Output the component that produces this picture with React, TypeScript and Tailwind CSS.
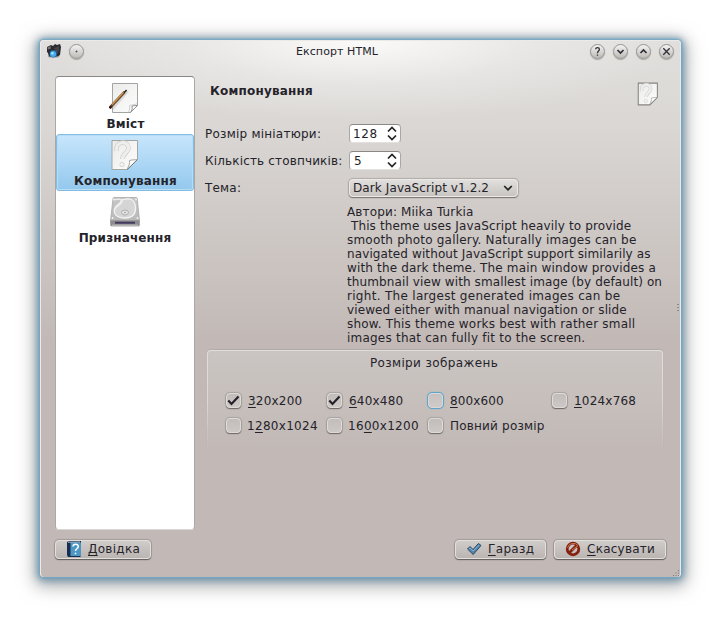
import React from 'react';

const WinButton = ({ children }: { children?: React.ReactNode }) => (
  <div className="h-[15px] w-[15px] rounded-full border border-[#96928f] bg-gradient-to-b from-[#f4f3f2] to-[#bdb9b6] shadow-[0_1px_1px_#aaa6a2]">
    <svg viewBox="0 0 13 13" className="block h-[13px] w-[13px]" fill="none" stroke="#302e35" strokeWidth="1.3">
      {children}
    </svg>
  </div>
);

const Page = ({ pencil, question, big }: { pencil?: boolean; question?: boolean; big?: boolean }) => (
  <svg viewBox="0 0 32 32" className="block h-full w-full">
    <defs>
      <linearGradient id="paper" x1="0" y1="0" x2="1" y2="1">
        <stop offset="0" stopColor="#ebebea" />
        <stop offset="1" stopColor="#fdfdfd" />
      </linearGradient>
    </defs>
    <path d={question ? 'M3 1.500h25.500v19l-10 10H3z' : 'M3.500 1.500h25v22l-7 7h-18z'} fill="url(#paper)" stroke={big ? '#a3a5a3' : '#85857f'} strokeWidth={big ? 1 : 1.4} />
    {question && (
      <>
        <path d="M7.500 12C6 2 19 1 19.500 9c0 5-6 5-6 11" fill="none" stroke="#cdcdcd" strokeWidth="4.600" />
        <path d="M7.500 12C6 2 19 1 19.500 9c0 5-6 5-6 11" fill="none" stroke="#eeeeed" strokeWidth="3.200" />
        <circle cx="13" cy="25.500" r="2.200" fill="#f3f3f3" stroke="#cdcdcd" strokeWidth=".8" />
        <path d="M28.500 20.500c-3 .5-6 .3-8 1 .5 3-.5 5-2.500 9z" fill="#fff" stroke="#a0a2a0" strokeWidth="1" />
        <path d="M28 21L18.500 30.500" stroke="#6f716f" strokeWidth=".8" />
      </>
    )}
    {pencil && (
      <>
        <path d="M28.500 23.500c-2 .2-4 0-5.500.5.500 2.500 0 4.500-1.500 6.500z" fill="#fff" stroke="#8d8f8d" strokeWidth="1" />
        <path d="M19.500 30c1.500-2 1-4 1-6.500 3-1 5-.5 8-2" fill="none" stroke="#c2c2c2" strokeWidth=".8" />
        <path d="M3 27L18.500 9" stroke="#999" strokeWidth="3" opacity=".3" />
        <path d="M1.500 25L15.500 10" stroke="#5c4128" strokeWidth="2.600" />
        <path d="M3 22.700L14.800 10" stroke="#cf9450" strokeWidth="1.500" />
        <path d="M15 10.800L17.600 8" stroke="#222" strokeWidth="1.500" />
        <path d="M.5 26.200l1.700-1.700" stroke="#33130d" strokeWidth="2.600" />
      </>
    )}
  </svg>
);

const Disk = () => (
  <svg viewBox="0 0 32 32" className="block h-8 w-8">
    <defs>
      <linearGradient id="disk" x1="0" y1="0" x2="0" y2="1">
        <stop offset="0" stopColor="#c6c6c6" />
        <stop offset="1" stopColor="#b9b9b9" />
      </linearGradient>
    </defs>
    <path d="M4 2.500q.2-1 1-1h22q1 0 1.200 1l2.300 22h-29z" fill="url(#disk)" stroke="#aaa" strokeWidth=".8" />
    <path d="M1.500 24.500h29v4q0 1.500-1 1.500H2.500q-1 0-1-1.500z" fill="#8d8d90" stroke="#999" strokeWidth=".8" />
    <path d="M6 26.700h20" stroke="#433860" strokeWidth="2" />
    <path d="M3 29.200h26" stroke="#c4c4c4" strokeWidth="1" />
    <path d="M17 3c6-1 9 2 9.500 8s-2 11-10.500 11S4.500 18 5.500 13c1-4 5-4 6-7 .5-2 2-2.700 5.500-3z" fill="#d5d5d5" stroke="#f3f3f3" strokeWidth="1.300" />
    <path d="M6 4c3-1.500 8-1 7 2s-6 4-7 7" fill="none" stroke="#efefef" strokeWidth="1.200" />
    <ellipse cx="16" cy="16.500" rx="3.500" ry="2.500" fill="#e2e2e2" stroke="#a5a5a5" strokeWidth=".8" />
    <circle cx="16" cy="16.500" r=".8" fill="#999" />
    <circle cx="5" cy="3.500" r=".9" fill="#f4f4f4" />
    <circle cx="27" cy="3.500" r=".9" fill="#f4f4f4" />
    <circle cx="28.500" cy="22" r=".9" fill="#f4f4f4" />
    <circle cx="3.500" cy="22" r=".9" fill="#f4f4f4" />
  </svg>
);

const Camera = () => (
  <svg viewBox="0 0 16 16" className="block h-4 w-4">
    <path d="M1 4l4-2 2 1 2-2 2 1 3-1 1 3-1 8-3 2H3L2 10 1 9z" fill="#2b2a30" />
    <path d="M1.500 4.500l3-1.500.5 2.500-3 1z" fill="#77757a" />
    <path d="M8 5l5-2v5l-2 3z" fill="#454249" />
    <path d="M1.500 13h12l-1 1.500H3z" fill="#909090" opacity=".7" />
    <circle cx="7.300" cy="10.700" r="3.800" fill="#23638f" />
    <circle cx="7.100" cy="11" r="3" fill="#43aaf0" />
    <circle cx="6.400" cy="10.200" r="1.200" fill="#a9e5ff" />
  </svg>
);

const Spin = ({ value, cls }: { value: string; cls: string }) => (
  <div className="flex h-[19px] w-[52px] items-center justify-between rounded-[4px] border border-[#aaa6a3] border-t-[#8b8784] border-b-[#e3e0de] bg-white pr-[3px] pl-[3px]">
    <span className={cls}>{value}</span>
    <svg viewBox="0 0 10 15" className="h-[15px] w-[10px]" fill="none" stroke="#222" strokeWidth="1.700">
      <path d="M1 5.500L5 1.500 9 5.500M1 9.500L5 13.500 9 9.500" />
    </svg>
  </div>
);

const Check = ({ pre = '', hot = '', post, checked, focus, cls }: { pre?: string; hot?: string; post: string; checked?: boolean; focus?: boolean; cls: string }) => (
  <div className="flex h-[25px] items-center">
    <div
      className={
        focus
          ? 'h-[17px] w-[17px] rounded-[5px] border-[1.500px] border-[#5fa4cc] bg-gradient-to-b from-[#c7c2bf] to-[#d0cbc8] shadow-[inset_0_0_0_1px_#dcd9d7,0_0_1px_#5fa4cc]'
          : 'mb-px ml-px h-[15px] w-[15px] rounded-[4px] border border-[#dedbd9] bg-gradient-to-b from-[#c2bdba] to-[#cdc8c5] shadow-[0_1px_1px_#6e6a68,0_0_1px_1px_#a8a39f]'
      }
    >
      {checked && (
        <svg viewBox="0 0 13 13" className="block h-[13px] w-[13px]" fill="none" stroke="#242228" strokeWidth="2.200">
          <path d="M1.300 6.500L4.500 10 11.500 2.500" />
        </svg>
      )}
    </div>
    <span className={cls}>
      {pre}
      <u className="underline decoration-1 underline-offset-2">{hot}</u>
      {post}
    </span>
  </div>
);

const PushButton = ({ hot, post, icon, cls, textCls }: { hot: string; post: string; icon: React.ReactNode; cls: string; textCls: string }) => (
  <button className={`flex h-[19px] items-center rounded-[4px] border border-[#e2dfdd] bg-gradient-to-b from-[#d0ccca] to-[#bbb5b2] pl-[10px] shadow-[0_1px_1px_#625e5c,0_0_1px_1px_#a29d9a] ${cls}`}>
    {icon}
    <span className={textCls}>
      <u className="underline decoration-1 underline-offset-2">{hot}</u>
      {post}
    </span>
  </button>
);

const lines: [string, string][] = [
  ['Автори: Miika Turkia', 'tracking-[0.15px]'],
  ['\u00a0This theme uses JavaScript heavily to provide', 'tracking-[0.135px]'],
  ['smooth photo gallery. Naturally images can be', 'tracking-[0.2px]'],
  ['navigated without JavaScript support similarily as', 'tracking-[0.11px]'],
  ['with the dark theme. The main window provides a', 'tracking-[0.155px]'],
  ['thumbnail view with smallest image (by default) on', 'tracking-[0.11px]'],
  ['right. The largest generated images can be', 'tracking-[0.3px]'],
  ['viewed either with manual navigation or slide', 'tracking-[0.11px]'],
  ['show. This theme works best with rather small', 'tracking-[0.2px]'],
  ['images that can fully fit to the screen.', 'tracking-[0.22px]'],
];

export default function App() {
  return (
    <div className="h-[617px] w-[721px] overflow-hidden bg-white pt-[40px] pl-[40px] font-['DejaVu_Sans',sans-serif] text-[12px] leading-[14px] whitespace-nowrap text-[#25232a]">
      <div className="flex h-[537px] w-[641px] flex-col rounded-[4px] border border-b-0 border-[#ece9e7] bg-[radial-gradient(ellipse_320px_80px_at_50%_0,#fafaf9_0%,#f4f3f266_55%,transparent_100%),linear-gradient(to_bottom,#e1dfdd_0px,#d9d6d3_90px,#c2b9b6_300px,#c2b9b6_100%)] shadow-[0_0_2px_1px_#6fa9c8,0_1px_7px_3px_#5688a5b3,0_4px_17px_6px_#80808099]">
        <div className="flex h-[20px] shrink-0 items-center pr-[6px] pl-[5px]">
          <Camera />
          <div className="ml-[7px]">
            <WinButton>
              <circle cx="6.500" cy="6.500" r=".5" strokeWidth="1" />
            </WinButton>
          </div>
          <div className="flex-1 pt-px text-center text-[11px] tracking-[0.08px]">Експорт HTML</div>
          <div className="flex gap-[8px]">
            <WinButton>
              <path d="M4.600 4.200C4.700 2 8.400 2 8.400 4.200c0 2-1.900 1.500-1.900 4M6.500 9.500v1.200" />
            </WinButton>
            <WinButton>
              <path d="M3.500 5L6.500 8l3-3" strokeWidth="1.700" />
            </WinButton>
            <WinButton>
              <path d="M3.500 8L6.500 5l3 3" strokeWidth="1.700" />
            </WinButton>
            <WinButton>
              <path d="M3.300 3.300l6.400 6.400M9.700 3.300l-6.400 6.400" />
            </WinButton>
          </div>
        </div>

        <div className="mt-[15px] flex h-[454px] shrink-0 pl-[14px]">
          <div className="flex w-[140px] shrink-0 flex-col rounded-[4px] border border-[#aaa7a5] border-t-[#898684] border-b-[#d9d6d4] bg-white text-center font-bold">
            <div className="flex h-[57px] flex-col items-center pt-[5px]">
              <div className="h-8 w-8">
                <Page pencil big />
              </div>
              <div className="mt-[3px] ml-px tracking-[0.2px]">Вміст</div>
            </div>
            <div className="flex h-[57px] flex-col items-center rounded-[3px] border border-[#83bce2] bg-gradient-to-b from-[#c7e6fc] to-[#93c8ed] pt-[4px] shadow-[inset_0_0_0_1px_#b6dcf6]">
              <div className="mr-px h-8 w-8">
                <Page question big />
              </div>
              <div className="mt-[3px] ml-px tracking-[0.2px]">Компонування</div>
            </div>
            <div className="flex h-[57px] flex-col items-center pt-[5px]">
              <Disk />
              <div className="mt-[3px] tracking-[0.15px]">Призначення</div>
            </div>
          </div>

          <div className="ml-[10px] flex w-[458px] flex-col">
            <div className="flex h-[44px] items-start justify-between pt-[6px] pr-[3px] pl-[5px]">
              <span className="mt-[2px] font-bold tracking-[0.2px]">Компонування</span>
              <div className="h-6 w-6">
                <Page question />
              </div>
            </div>
            <div className="flex h-[27px] items-center">
              <span className="w-[144px] tracking-[0.23px]">Розмір мініатюри:</span>
              <Spin value="128" cls="tracking-[0.6px]" />
            </div>
            <div className="flex h-[27px] items-center">
              <span className="w-[144px] tracking-[0.16px]">Кількість стовпчиків:</span>
              <Spin value="5" cls="pl-px tracking-[0.4px]" />
            </div>
            <div className="flex h-[27px] items-center">
              <span className="w-[144px] tracking-[0.2px]">Тема:</span>
              <div className="flex h-[18px] w-[169px] items-center justify-between rounded-[4px] border border-[#ebe9e7] bg-gradient-to-b from-[#e1dfdd] to-[#c8c4c1] pr-[4px] pl-[3px] shadow-[0_1px_1px_#7a7673,0_0_1px_1px_#b0aba8]">
                <span className="tracking-[0.1px]">Dark JavaScript v1.2.2</span>
                <svg viewBox="0 0 10 8" className="h-[8px] w-[10px]" fill="none" stroke="#222" strokeWidth="1.700">
                  <path d="M1.200 2L5 5.800 8.800 2" />
                </svg>
              </div>
            </div>
            <div className="mt-[4px] ml-[142px]">
              {lines.map(([text, tracking]) => (
                <div key={text} className="h-[14px]">
                  <span className={tracking}>{text}</span>
                </div>
              ))}
            </div>
            <div className="mt-[5px] ml-[2px] h-[100px] w-[456px] rounded-t-[4px] bg-gradient-to-b from-[#e1dedc] via-[#dbd8d6] to-transparent p-px pb-0 shadow-[0_-1px_1px_#b0aaa7]">
              <div className="h-full rounded-t-[3px] bg-gradient-to-b from-[#cac5c2] to-[#c2b9b6] pt-[5px]">
                <div className="pr-[2px] text-center tracking-[0.38px]">Розміри зображень</div>
                <div className="mt-[18px] grid grid-cols-[101px_101px_124px_1fr] pl-[17px]">
                  <Check hot="3" post="20x200" checked cls="ml-[7px] tracking-[0.2px]" />
                  <Check hot="6" post="40x480" checked cls="ml-[7px] tracking-[0.2px]" />
                  <Check hot="8" post="00x600" focus cls="ml-[6px] tracking-[0.1px]" />
                  <Check hot="1" post="024x768" cls="ml-[7px] tracking-[0.2px]" />
                  <Check pre="1" hot="2" post="80x1024" cls="ml-[6px] tracking-[0.3px]" />
                  <Check pre="16" hot="0" post="0x1200" cls="ml-[6px] tracking-[0.3px]" />
                  <Check post="Повний розмір" cls="ml-[7px] tracking-[0.2px]" />
                </div>
              </div>
            </div>
          </div>
          <div className="mt-[228px] ml-auto grid h-[8px] w-[3px] gap-px">
            <i className="h-px w-[2px] bg-[#8f8986]" />
            <i className="h-px w-[2px] bg-[#8f8986]" />
            <i className="h-px w-[2px] bg-[#8f8986]" />
          </div>
        </div>

        <div className="mt-[9px] flex h-[20px] shrink-0 items-center pr-[14px] pl-[14px]">
          <PushButton
            hot="Д"
            post="овідка"
            cls="w-[96px]"
            textCls="ml-[6px] tracking-[0.3px]"
            icon={
              <svg viewBox="0 0 16 16" className="h-4 w-4">
                <path d="M1 1l2-1h12v15l-1 1H2L1 14z" fill="#172e50" />
                <path d="M4.500 1.500h10.500v13.500H4.500z" fill="#4c96c4" />
                <path d="M2 1.200L14 1" stroke="#dbe6ed" strokeWidth=".8" />
                <path d="M7 5.500C7 2.500 12.500 2.500 12.300 5.500c0 2.500-2.800 2-2.800 4.500M9.500 11.800v1.500" stroke="#fff" strokeWidth="1.500" fill="none" />
              </svg>
            }
          />
          <PushButton
            hot="Г"
            post="аразд"
            cls="ml-auto w-[91px]"
            textCls="ml-[6px] tracking-[0.35px]"
            icon={
              <svg viewBox="0 0 16 16" className="h-4 w-4">
                <path d="M1.500 8l2.500-2.500L7 8.500l5.500-6L15 4.500 7.200 13.500z" fill="#5486ab" stroke="#2c4763" strokeWidth="1" />
                <path d="M3.200 8l1-1 3 3 6-6" fill="none" stroke="#8fbad4" strokeWidth=".9" />
              </svg>
            }
          />
          <PushButton
            hot="С"
            post="касувати"
            cls="ml-[8px] w-[112px]"
            textCls="ml-[6px] tracking-[0.25px]"
            icon={
              <svg viewBox="0 0 16 16" className="h-4 w-4" fill="none">
                <circle cx="8" cy="8" r="5.800" stroke="#85200f" strokeWidth="2.800" />
                <path d="M4 12l8-8" stroke="#85200f" strokeWidth="2.800" />
                <path d="M2.500 7A6 6 0 0 1 13 4.500L7 9" stroke="#b9774f" strokeWidth="1" />
              </svg>
            }
          />
        </div>
        <svg viewBox="0 0 6 6" className="mt-auto mr-px mb-px ml-auto h-[6px] w-[6px] shrink-0">
          <path d="M0 5.500h1m1.500 0h1m1.500 0h1M2.500 3h1M5 3h1M5 .5h1" stroke="#807b78" />
        </svg>
      </div>
    </div>
  );
}
